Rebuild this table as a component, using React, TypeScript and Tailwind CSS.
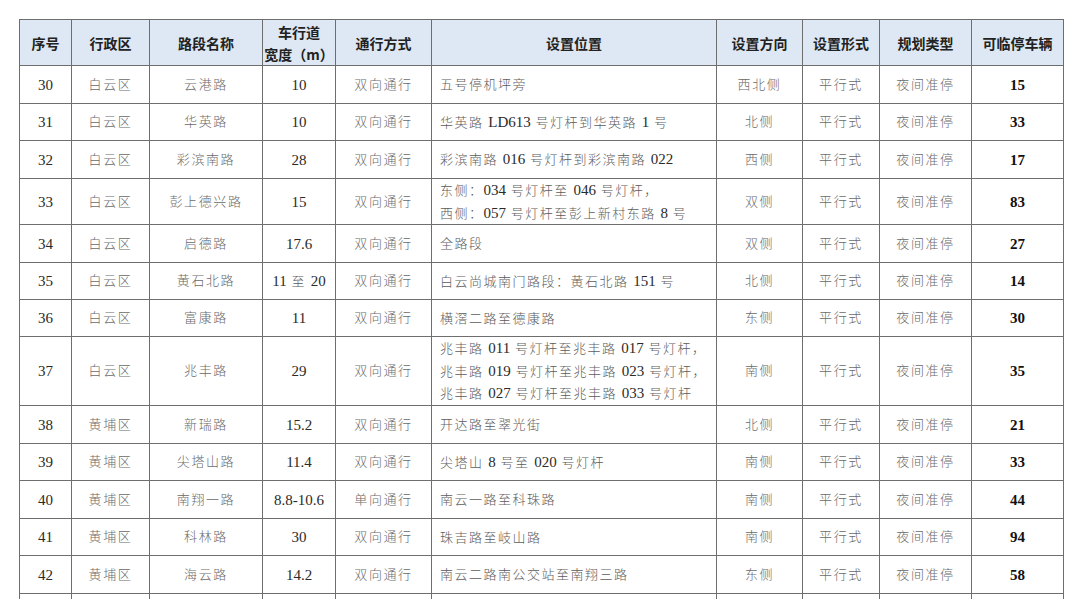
const cols = [52, 78, 113, 73, 96, 285, 86, 77, 92, 92];

type Row = {
  no: string;
  district: string;
  road: string;
  width: string;
  mode: string;
  place: string[];
  side: string;
  form: string;
  kind: string;
  count: string;
  h: string;
};

const rows: Row[] = [
  { no: '30', district: '白云区', road: '云港路', width: '10', mode: '双向通行', place: ['五号停机坪旁'], side: '西北侧', form: '平行式', kind: '夜间准停', count: '15', h: 'h-[38px]' },
  { no: '31', district: '白云区', road: '华英路', width: '10', mode: '双向通行', place: ['华英路 LD613 号灯杆到华英路 1 号'], side: '北侧', form: '平行式', kind: '夜间准停', count: '33', h: 'h-[37px]' },
  { no: '32', district: '白云区', road: '彩滨南路', width: '28', mode: '双向通行', place: ['彩滨南路 016 号灯杆到彩滨南路 022'], side: '西侧', form: '平行式', kind: '夜间准停', count: '17', h: 'h-[38px]' },
  { no: '33', district: '白云区', road: '彭上德兴路', width: '15', mode: '双向通行', place: ['东侧：034 号灯杆至 046 号灯杆，', '西侧：057 号灯杆至彭上新村东路 8 号'], side: '双侧', form: '平行式', kind: '夜间准停', count: '83', h: 'h-[46px]' },
  { no: '34', district: '白云区', road: '启德路', width: '17.6', mode: '双向通行', place: ['全路段'], side: '双侧', form: '平行式', kind: '夜间准停', count: '27', h: 'h-[38px]' },
  { no: '35', district: '白云区', road: '黄石北路', width: '11 至 20', mode: '双向通行', place: ['白云尚城南门路段：黄石北路 151 号'], side: '北侧', form: '平行式', kind: '夜间准停', count: '14', h: 'h-[37px]' },
  { no: '36', district: '白云区', road: '富康路', width: '11', mode: '双向通行', place: ['横滘二路至德康路'], side: '东侧', form: '平行式', kind: '夜间准停', count: '30', h: 'h-[37px]' },
  { no: '37', district: '白云区', road: '兆丰路', width: '29', mode: '双向通行', place: ['兆丰路 011 号灯杆至兆丰路 017 号灯杆，', '兆丰路 019 号灯杆至兆丰路 023 号灯杆，', '兆丰路 027 号灯杆至兆丰路 033 号灯杆'], side: '南侧', form: '平行式', kind: '夜间准停', count: '35', h: 'h-[69px]' },
  { no: '38', district: '黄埔区', road: '新瑞路', width: '15.2', mode: '双向通行', place: ['开达路至翠光街'], side: '北侧', form: '平行式', kind: '夜间准停', count: '21', h: 'h-[38px]' },
  { no: '39', district: '黄埔区', road: '尖塔山路', width: '11.4', mode: '双向通行', place: ['尖塔山 8 号至 020 号灯杆'], side: '南侧', form: '平行式', kind: '夜间准停', count: '33', h: 'h-[37px]' },
  { no: '40', district: '黄埔区', road: '南翔一路', width: '8.8-10.6', mode: '单向通行', place: ['南云一路至科珠路'], side: '南侧', form: '平行式', kind: '夜间准停', count: '44', h: 'h-[38px]' },
  { no: '41', district: '黄埔区', road: '科林路', width: '30', mode: '双向通行', place: ['珠吉路至岐山路'], side: '南侧', form: '平行式', kind: '夜间准停', count: '94', h: 'h-[37px]' },
  { no: '42', district: '黄埔区', road: '海云路', width: '14.2', mode: '双向通行', place: ['南云二路南公交站至南翔三路'], side: '东侧', form: '平行式', kind: '夜间准停', count: '58', h: 'h-[38px]' },
];

const serif = "font-['Liberation_Serif','Noto_Sans_CJK_SC',serif]";
const cell = 'border border-[#6e6e6e] p-0 align-middle';
const zh = 'text-[13px] tracking-[1.6px] text-[#6a6a6a] font-light';

// split mixed text so that only the Chinese runs get letter spacing
function Mixed({ text }: { text: string }) {
  const parts = text.split(/([A-Za-z0-9.\-]+)/).filter((p) => p !== '');
  return (
    <>
      {parts.map((p, i) =>
        /^[A-Za-z0-9.\-]+$/.test(p) ? (
          <span key={i} className="text-[15px] leading-none text-[#2a2a2a]">
            {p}
          </span>
        ) : (
          <span key={i} className="text-[13px] leading-none tracking-[1.5px] text-[#5c5c5c] font-light">
            {p}
          </span>
        )
      )}
    </>
  );
}

export default function App() {
  return (
    <div className="min-h-screen bg-white pl-[19px] pt-[19px]">
      <table className={`table-fixed border-collapse w-[1044px] ${serif}`}>
        <colgroup>
          {cols.map((w, i) => (
            <col key={i} style={{ width: w }} />
          ))}
        </colgroup>
        <thead>
          <tr className="h-[46px] bg-[#dde8f4] font-['Noto_Sans_CJK_SC',sans-serif] text-[14px] font-bold text-[#222] leading-[22px]">
            <th className={cell}>序号</th>
            <th className={cell}>行政区</th>
            <th className={cell}>路段名称</th>
            <th className={cell}>
              车行道
              <br />
              宽度（m）
            </th>
            <th className={cell}>通行方式</th>
            <th className={cell}>设置位置</th>
            <th className={cell}>设置方向</th>
            <th className={cell}>设置形式</th>
            <th className={cell}>规划类型</th>
            <th className={cell}>可临停车辆</th>
          </tr>
        </thead>
        <tbody>
          {rows.map((r) => (
            <tr key={r.no} className={`${r.h} text-center leading-[22px]`}>
              <td className={`${cell} text-[15px] text-[#2a2a2a]`}>{r.no}</td>
              <td className={`${cell} ${zh}`}>{r.district}</td>
              <td className={`${cell} ${zh}`}>{r.road}</td>
              <td className={cell}>
                <div className="h-[22px] leading-[22px]">
                  <Mixed text={r.width} />
                </div>
              </td>
              <td className={`${cell} ${zh}`}>{r.mode}</td>
              <td className={`${cell} text-left pl-2`}>
                {r.place.map((p, i) => (
                  <div key={i} className="h-[22.5px] leading-[22.5px] whitespace-nowrap">
                    <Mixed text={p} />
                  </div>
                ))}
              </td>
              <td className={`${cell} ${zh}`}>{r.side}</td>
              <td className={`${cell} ${zh}`}>{r.form}</td>
              <td className={`${cell} ${zh}`}>{r.kind}</td>
              <td className={`${cell} text-[15px] font-bold text-[#111]`}>{r.count}</td>
            </tr>
          ))}
          <tr className="h-[38px]">
            {cols.map((_, i) => (
              <td key={i} className={cell}></td>
            ))}
          </tr>
        </tbody>
      </table>
    </div>
  );
}
